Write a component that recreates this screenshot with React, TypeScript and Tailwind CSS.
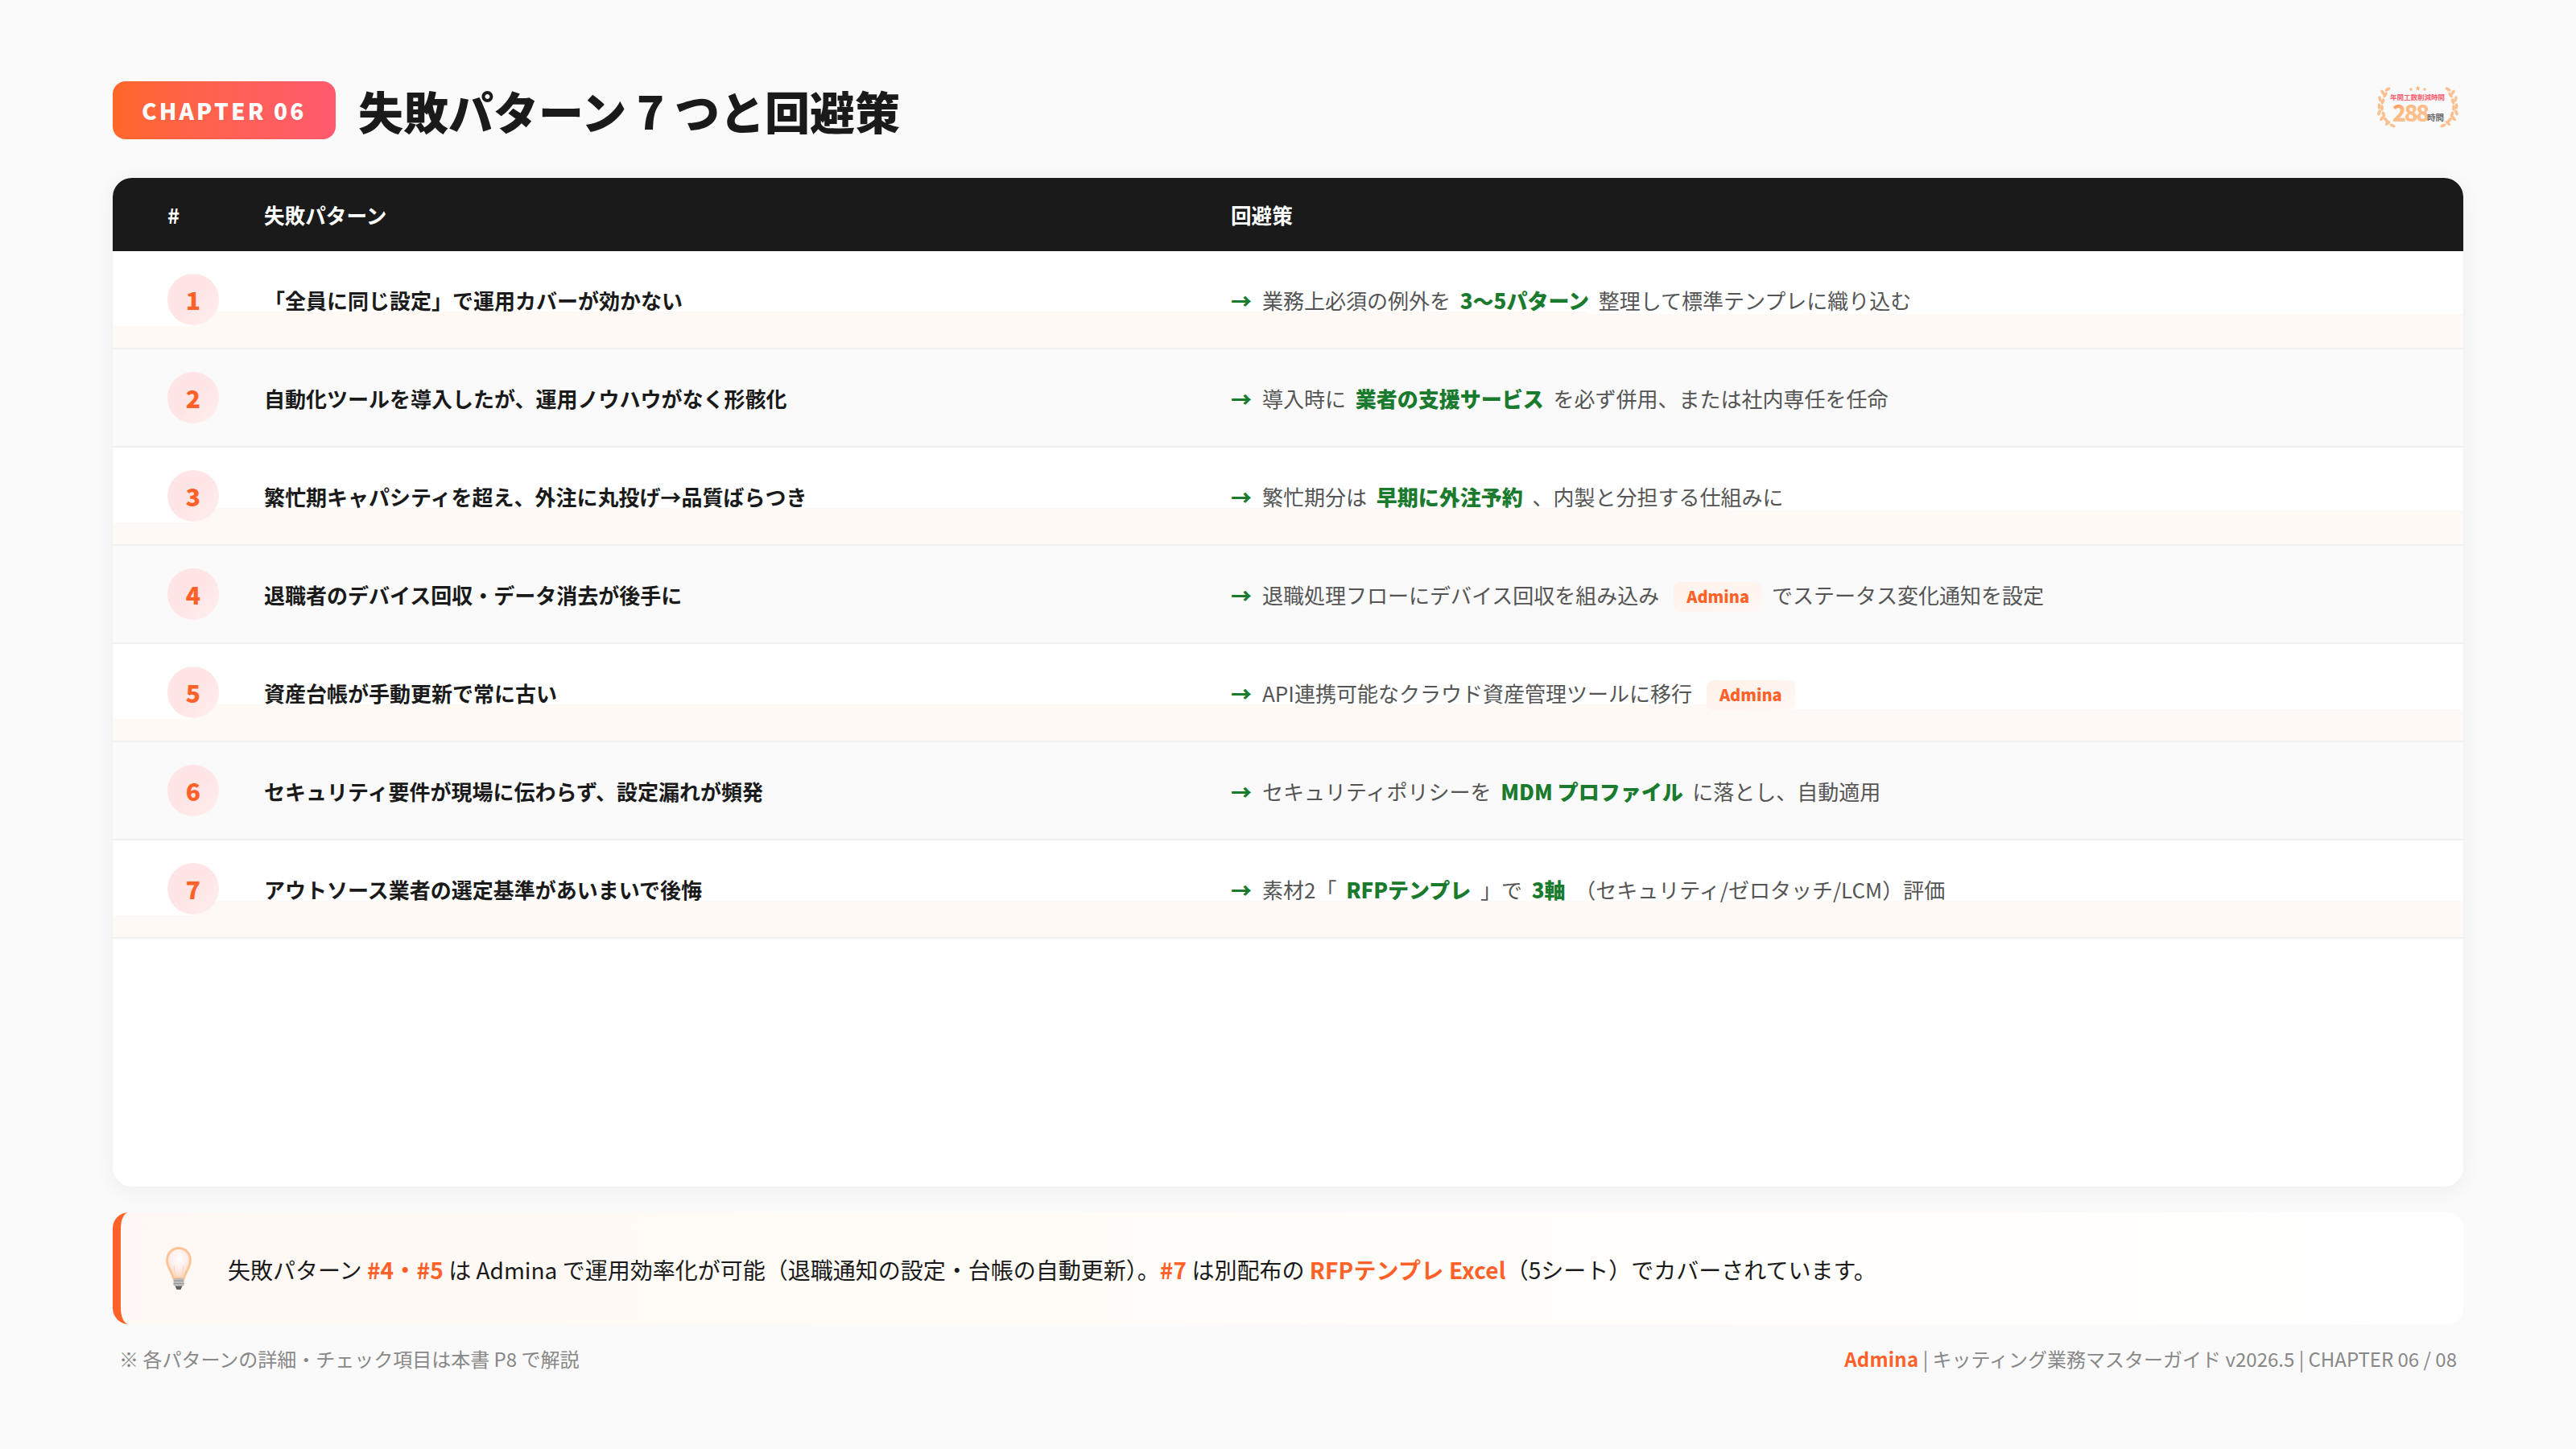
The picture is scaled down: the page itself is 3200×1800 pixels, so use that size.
import type { ReactNode } from 'react';

const FONT = '"Noto Sans CJK JP", "Noto Sans", sans-serif';

function Strong({ children }: { children: ReactNode }) {
  return <strong className="mx-[11.7px] font-black text-[#1a7a2e]">{children}</strong>;
}

function Tag() {
  return (
    <span className="-my-2 mr-[12px] ml-[18px] inline-block h-[37px] rounded-lg bg-linear-to-br from-[#fff1ea] to-[#fff8f4] px-[16px] align-[1px] text-[20px] leading-[35px] font-black text-[#ff6128]">
      Admina
    </span>
  );
}

type Row = {
  pattern: string;
  action: ReactNode;
  step?: string;
};

const rows: Row[] = [
  {
    pattern: '「全員に同じ設定」で運用カバーが効かない',
    action: (
      <>
        業務上必須の例外を<Strong>3〜5パターン</Strong>整理して標準テンプレに織り込む
      </>
    ),
    step: 'bg-[linear-gradient(#fff_78px,transparent_78px)] bg-[position:444px_0] bg-no-repeat',
  },
  {
    pattern: '自動化ツールを導入したが、運用ノウハウがなく形骸化',
    action: (
      <>
        導入時に<Strong>業者の支援サービス</Strong>を必ず併用、または社内専任を任命
      </>
    ),
  },
  {
    pattern: '繁忙期キャパシティを超え、外注に丸投げ→品質ばらつき',
    action: (
      <>
        繁忙期分は<Strong>早期に外注予約</Strong>、内製と分担する仕組みに
      </>
    ),
    step: 'bg-[linear-gradient(#fff_78px,transparent_78px)] bg-[position:618px_0] bg-no-repeat',
  },
  {
    pattern: '退職者のデバイス回収・データ消去が後手に',
    action: (
      <>
        退職処理フローにデバイス回収を組み込み
        <Tag />
        でステータス変化通知を設定
      </>
    ),
  },
  {
    pattern: '資産台帳が手動更新で常に古い',
    action: (
      <>
        API連携可能なクラウド資産管理ツールに移行
        <Tag />
      </>
    ),
    step: 'bg-[linear-gradient(#fff_81px,transparent_81px)] bg-[position:594px_0] bg-no-repeat',
  },
  {
    pattern: 'セキュリティ要件が現場に伝わらず、設定漏れが頻発',
    action: (
      <>
        セキュリティポリシーを<Strong>MDM プロファイル</Strong>に落とし、自動適用
      </>
    ),
  },
  {
    pattern: 'アウトソース業者の選定基準があいまいで後悔',
    action: (
      <>
        素材2「<Strong>RFPテンプレ</Strong>」で<Strong>3軸</Strong>（セキュリティ/ゼロタッチ/LCM）評価
      </>
    ),
  },
];

// award badge in the top right corner
const leaves: [number, number, number][] = [
  [19, 50, 25],
  [13, 47, -40],
  [11, 43, 50],
  [6, 41, -50],
  [8, 36, 70],
  [2.5, 34, -70],
  [6, 28, 90],
  [2.5, 26, -90],
  [7, 20, 110],
  [3.5, 17, -105],
  [10, 12, 125],
  [7, 9, -125],
  [13, 5, -30],
];

function Star({ x, y, r }: { x: number; y: number; r: number }) {
  const points = Array.from({ length: 10 }, (_, i) => {
    const a = (Math.PI / 5) * i - Math.PI / 2;
    const d = i % 2 === 0 ? r : r * 0.45;
    return `${x + d * Math.cos(a)},${y + d * Math.sin(a)}`;
  }).join(' ');
  return <polygon points={points} fill="#fbb98a" />;
}

function Badge() {
  return (
    <svg viewBox="0 0 101 53" className="mr-[6px] h-[53px] w-[101px]" style={{ fontFamily: FONT }}>
      <defs>
        <linearGradient id="num" x1="0" y1="0" x2="0.5" y2="1">
          <stop offset="0" stopColor="#ff6a30" />
          <stop offset="0.45" stopColor="#fdbb86" />
          <stop offset="1" stopColor="#fcc08e" />
        </linearGradient>
      </defs>
      {leaves.map(([x, y, r], i) => (
        <g key={i} fill="#fbc090">
          <ellipse cx={x} cy={y} rx="3.8" ry="1.9" transform={`rotate(${r} ${x} ${y})`} />
          <ellipse cx={101 - x} cy={y} rx="3.8" ry="1.9" transform={`rotate(${-r} ${101 - x} ${y})`} />
        </g>
      ))}
      <Star x={50.5} y={3.8} r={3.6} />
      <Star x={42} y={5} r={2.6} />
      <Star x={59} y={5} r={2.6} />
      <text x="50" y="17.5" textAnchor="middle" fontSize="8.5" fontWeight="700" fill="#ff5f6e">
        年間工数削減時間
      </text>
      <text x="19" y="45" fontSize="28" fontWeight="900" fill="url(#num)" letterSpacing="-2.4">
        288
      </text>
      <text x="62" y="44" fontSize="10.5" fontWeight="700" fill="#666">
        時間
      </text>
    </svg>
  );
}

function Bulb() {
  return (
    <svg viewBox="0 0 32 54" className="h-[54px] w-[32px] shrink-0">
      <defs>
        <radialGradient id="glass" cx="0.5" cy="0.35" r="0.6">
          <stop offset="0" stopColor="#fff" />
          <stop offset="0.55" stopColor="#ffeeec" />
          <stop offset="1" stopColor="#ffd9c8" />
        </radialGradient>
      </defs>
      <path
        d="M16 1.5C7.5 1.5 1.5 8.5 1.5 17C1.5 25 7 29 9.5 39L22.5 39C25 29 30.5 25 30.5 17C30.5 8.5 24.5 1.5 16 1.5Z"
        fill="url(#glass)"
        stroke="#fcc494"
        strokeWidth="2.8"
      />
      <path d="M12 38L10 23M20 38L22 23" stroke="#fcd4b0" strokeWidth="1" fill="none" />
      <rect x="9.5" y="39" width="13" height="9.5" rx="1.5" fill="#bdbdbd" />
      <path d="M9.5 42H22.5M9.5 45.5H22.5" stroke="#949494" strokeWidth="1" />
      <path d="M11.5 48.5H20.5L18.5 53H13.5Z" fill="#606060" />
    </svg>
  );
}

export default function App() {
  return (
    <div
      className="flex h-[1800px] w-[3200px] flex-col bg-[#fafafa] px-[140px] pt-[101px] pb-[95px] text-[#1a1a1a]"
      style={{ fontFamily: FONT }}
    >
      {/* Title */}
      <header className="flex h-[72px] items-center">
        <div className="flex h-[72px] w-[277px] items-center rounded-2xl bg-linear-to-r from-[#ff6628] to-[#ff5a6e] pl-[36px] text-[28px] font-black tracking-[0.11em] text-white">
          CHAPTER 06
        </div>
        <h1 className="ml-[28px] text-[56px] font-black">失敗パターン 7 つと回避策</h1>
        <div className="mb-[10px] ml-auto">
          <Badge />
        </div>
      </header>

      {/* Table */}
      <div className="mt-[48px] flex flex-1 flex-col overflow-hidden rounded-3xl bg-white shadow-[0_4px_24px_rgba(0,0,0,0.06)]">
        <div className="grid h-[91px] shrink-0 grid-cols-[100px_1289px_1fr] items-center bg-[#1a1a1a] pt-[2px] text-[25.6px] font-bold text-white">
          <div className="pl-[68px]">#</div>
          <div className="pl-[88px]">失敗パターン</div>
          <div>回避策</div>
        </div>
        {rows.map((row, i) => {
          const odd = i % 2 === 0;
          return (
            <div
              key={row.pattern}
              className={`grid h-[122px] shrink-0 grid-cols-[100px_1289px_1fr] border-b-2 border-[#f0f0f0] ${
                odd
                  ? 'bg-[linear-gradient(#fff_75px,#fff9f5_75px)]'
                  : 'bg-[#fafafa]'
              }`}
            >
              <div
                className={`flex items-center pl-[68px] ${
                  odd ? 'bg-[linear-gradient(#fff_93px,#fff9f5_93px)]' : ''
                }`}
              >
                <span className="flex size-[64px] shrink-0 items-center justify-center rounded-full bg-linear-to-br from-[#ffe5e5] via-[#ffe5e5] to-[#fff0ee] text-[30px] font-black text-[#ff6128]">
                  {i + 1}
                </span>
              </div>
              <div className="flex items-center pl-[88px] text-[26px] font-bold">{row.pattern}</div>
              <div className={`flex items-center text-[26px] text-[#555] ${row.step ?? ''}`}>
                <div>
                  <span className="mr-[13px] font-black text-[#1a7a2e]">→</span>
                  {row.action}
                </div>
              </div>
            </div>
          );
        })}
      </div>

      {/* Callout */}
      <div className="mt-[32px] flex h-[139px] shrink-0 items-center rounded-[20px] border-l-[10px] border-[#ff6128] bg-linear-to-r from-[#fff8f4] via-[#fffdf9] to-white pl-[56px] text-[28px]">
        <Bulb />
        <p className="ml-[45px] pt-[3px]">
          失敗パターン <b className="font-bold tracking-[0.2px] text-[#ff6128]">#4・#5</b> は Admina で運用効率化が可能（退職通知の設定・台帳の自動更新）。
          <b className="font-bold tracking-[0.2px] text-[#ff6128]">#7</b> は別配布の <b className="font-bold tracking-[0.2px] text-[#ff6128]">RFPテンプレ Excel</b>（5シート）でカバーされています。
        </p>
      </div>

      {/* Footer */}
      <footer className="mt-[26px] flex h-[34px] shrink-0 items-center justify-between px-[8px] text-[24px] text-[#888]">
        <span>※ 各パターンの詳細・チェック項目は本書 P8 で解説</span>
        <span>
          <b className="font-bold tracking-[0.2px] text-[#ff6128]">Admina</b> | キッティング業務マスターガイド v2026.5 | CHAPTER 06 / 08
        </span>
      </footer>
    </div>
  );
}
